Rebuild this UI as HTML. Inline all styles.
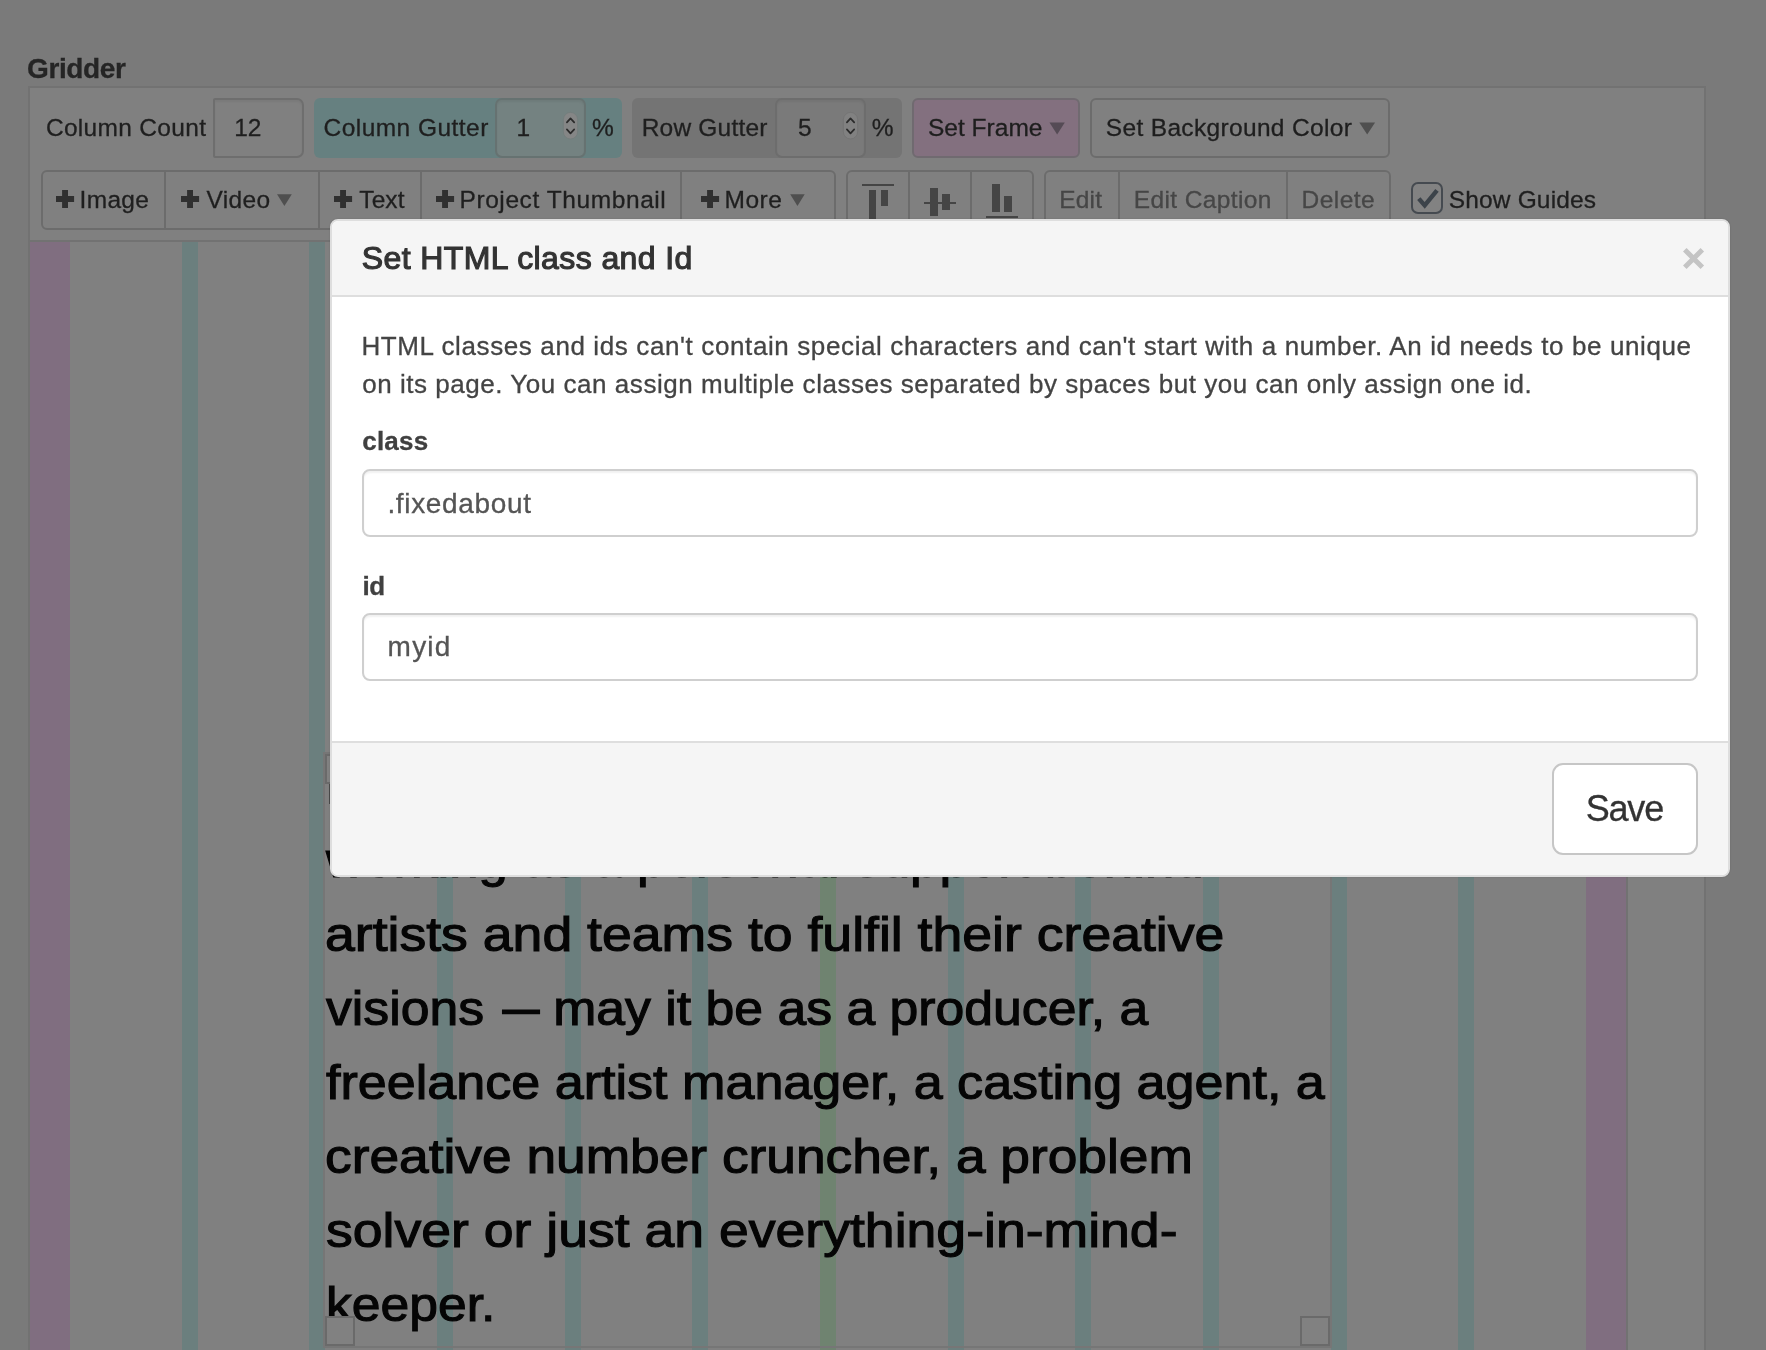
<!DOCTYPE html>
<html lang="en"><head><meta charset="utf-8"><title>Gridder</title>
<style>
html,body{margin:0;padding:0;}
body{width:1766px;height:1350px;overflow:hidden;position:relative;background:#7a7a7a;font-family:"Liberation Sans",sans-serif;}
.b{position:absolute;box-sizing:border-box;}
.t{position:absolute;white-space:nowrap;line-height:1;-webkit-text-stroke:0.3px currentColor;}
svg{position:absolute;overflow:visible;}
</style></head><body><div id="page" style="position:absolute;left:0;top:0;width:1766px;height:1350px;will-change:transform;">
<div class="b" style="left:28px;top:86px;width:1678px;height:1274px;background:#808080;border:2px solid #727272;"></div>
<div class="b" style="left:30px;top:240px;width:1674px;height:2px;background:#727272;"></div>
<div class="b" style="left:30px;top:242px;width:40px;height:1108px;background:#806e80;"></div>
<div class="b" style="left:1586px;top:242px;width:40px;height:1108px;background:#806e80;"></div>
<div class="b" style="left:1626px;top:242px;width:2px;height:1108px;background:#727272;"></div>
<div class="b" style="left:181.62px;top:242px;width:15.96px;height:1108px;background:#6b7f7e;"></div>
<div class="b" style="left:309.30px;top:242px;width:15.96px;height:1108px;background:#6b7f7e;"></div>
<div class="b" style="left:436.98px;top:242px;width:15.96px;height:1108px;background:#6b7f7e;"></div>
<div class="b" style="left:564.66px;top:242px;width:15.96px;height:1108px;background:#6b7f7e;"></div>
<div class="b" style="left:692.34px;top:242px;width:15.96px;height:1108px;background:#6b7f7e;"></div>
<div class="b" style="left:820.02px;top:242px;width:15.96px;height:1108px;background:#6f8370;"></div>
<div class="b" style="left:947.70px;top:242px;width:15.96px;height:1108px;background:#6b7f7e;"></div>
<div class="b" style="left:1075.38px;top:242px;width:15.96px;height:1108px;background:#6b7f7e;"></div>
<div class="b" style="left:1203.06px;top:242px;width:15.96px;height:1108px;background:#6b7f7e;"></div>
<div class="b" style="left:1330.74px;top:242px;width:15.96px;height:1108px;background:#6b7f7e;"></div>
<div class="b" style="left:1458.42px;top:242px;width:15.96px;height:1108px;background:#6b7f7e;"></div>
<span class="t" style="left:27.00px;top:54.70px;font-size:28px;letter-spacing:-0.372px;color:#252525;font-weight:bold;">Gridder</span>
<span class="t" style="left:45.90px;top:115.76px;font-size:24.5px;letter-spacing:0.318px;color:#1f1f1f;">Column Count</span>
<div class="b" style="left:213px;top:98px;width:91px;height:60px;border:2px solid #6e6e6e;border-radius:2px 7px 7px 2px;background:#808080;box-shadow:inset 0 2px 2px rgba(0,0,0,.05);"></div>
<span class="t" style="left:234.20px;top:115.76px;font-size:24.5px;letter-spacing:0.000px;color:#1f1f1f;">12</span>
<div class="b" style="left:314px;top:98px;width:308px;height:60px;background:#668080;border-radius:6px;"></div>
<span class="t" style="left:323.50px;top:115.76px;font-size:24.5px;letter-spacing:0.462px;color:#1f1f1f;">Column Gutter</span>
<div class="b" style="left:495px;top:98px;width:91px;height:60px;border:2px solid #667271;border-radius:7px;background:#748281;box-shadow:inset 0 2px 2px rgba(0,0,0,.05);"></div>
<span class="t" style="left:516.50px;top:115.76px;font-size:24.5px;letter-spacing:0.000px;color:#1f1f1f;">1</span>
<span class="t" style="left:592.00px;top:115.76px;font-size:24.5px;letter-spacing:0.000px;color:#1f1f1f;">%</span>
<div class="b" style="left:632px;top:98px;width:270px;height:60px;background:#747474;border-radius:6px;"></div>
<span class="t" style="left:641.70px;top:115.76px;font-size:24.5px;letter-spacing:0.207px;color:#1f1f1f;">Row Gutter</span>
<div class="b" style="left:775px;top:98px;width:91px;height:60px;border:2px solid #6d6d6d;border-radius:7px;background:#7a7a7a;box-shadow:inset 0 2px 2px rgba(0,0,0,.05);"></div>
<span class="t" style="left:797.90px;top:115.76px;font-size:24.5px;letter-spacing:0.000px;color:#1f1f1f;">5</span>
<span class="t" style="left:871.80px;top:115.76px;font-size:24.5px;letter-spacing:0.000px;color:#1f1f1f;">%</span>
<svg style="left:563.4px;top:112px" width="15" height="27.4" viewBox="0 0 15 27.4"><rect x="0.4" y="0.4" width="14.2" height="26.6" rx="7.1" fill="#858686" stroke="#727c7b" stroke-width="0.8"/><path d="M3.9 10.4 L7.5 6.4 L11.2 10.4 M3.9 17.4 L7.5 21.4 L11.2 17.4" fill="none" stroke="#2a2a2a" stroke-width="1.7" stroke-linecap="round" stroke-linejoin="round"/></svg>
<svg style="left:843.4px;top:112px" width="15" height="27.4" viewBox="0 0 15 27.4"><rect x="0.4" y="0.4" width="14.2" height="26.6" rx="7.1" fill="#818181" stroke="#727272" stroke-width="0.8"/><path d="M3.9 10.4 L7.5 6.4 L11.2 10.4 M3.9 17.4 L7.5 21.4 L11.2 17.4" fill="none" stroke="#2a2a2a" stroke-width="1.7" stroke-linecap="round" stroke-linejoin="round"/></svg>
<div class="b" style="left:912px;top:98px;width:168px;height:60px;background:#83707f;border:2px solid #706a70;border-radius:6px;"></div>
<span class="t" style="left:928.00px;top:115.76px;font-size:24.5px;letter-spacing:0.008px;color:#1e1e1e;">Set Frame</span>
<svg style="left:0;top:0" width="1" height="1"><path d="M1049.5 122.4 L1064.8 122.4 L1057.15 134.4 Z" fill="#554b55"/></svg>
<div class="b" style="left:1090px;top:98px;width:300px;height:60px;border:2px solid #6c6c6c;border-radius:6px;"></div>
<span class="t" style="left:1105.80px;top:115.76px;font-size:24.5px;letter-spacing:0.335px;color:#1e1e1e;">Set Background Color</span>
<svg style="left:0;top:0" width="1" height="1"><path d="M1359.3 122.4 L1375.1 122.4 L1367.1999999999998 134.4 Z" fill="#4f4f4f"/></svg>
<div class="b" style="left:41px;top:170px;width:795px;height:60px;border:2px solid #6c6c6c;border-radius:6px;"></div>
<div class="b" style="left:164px;top:171px;width:2px;height:58px;background:#6c6c6c;"></div>
<div class="b" style="left:318px;top:171px;width:2px;height:58px;background:#6c6c6c;"></div>
<div class="b" style="left:420px;top:171px;width:2px;height:58px;background:#6c6c6c;"></div>
<div class="b" style="left:680px;top:171px;width:2px;height:58px;background:#6c6c6c;"></div>
<svg style="left:55.85px;top:189.9px" width="18.1" height="17.9" viewBox="0 0 18.1 17.9"><path d="M6.1 0 h5.9 v5.9 h6.1 v6.2 h-6.1 v5.8 h-5.9 v-5.8 h-6.1 v-6.2 h6.1 z" fill="#303030"/></svg>
<span class="t" style="left:79.50px;top:187.56px;font-size:24.5px;letter-spacing:0.333px;color:#1f1f1f;">Image</span>
<svg style="left:181px;top:189.9px" width="18.1" height="17.9" viewBox="0 0 18.1 17.9"><path d="M6.1 0 h5.9 v5.9 h6.1 v6.2 h-6.1 v5.8 h-5.9 v-5.8 h-6.1 v-6.2 h6.1 z" fill="#303030"/></svg>
<span class="t" style="left:206.40px;top:187.56px;font-size:24.5px;letter-spacing:0.352px;color:#1f1f1f;">Video</span>
<svg style="left:0;top:0" width="1" height="1"><path d="M277 194.3 L291.8 194.3 L284.4 206 Z" fill="#4f4f4f"/></svg>
<svg style="left:334px;top:189.9px" width="18.1" height="17.9" viewBox="0 0 18.1 17.9"><path d="M6.1 0 h5.9 v5.9 h6.1 v6.2 h-6.1 v5.8 h-5.9 v-5.8 h-6.1 v-6.2 h6.1 z" fill="#303030"/></svg>
<span class="t" style="left:359.30px;top:187.56px;font-size:24.5px;letter-spacing:0.091px;color:#1f1f1f;">Text</span>
<svg style="left:436.3px;top:189.9px" width="18.1" height="17.9" viewBox="0 0 18.1 17.9"><path d="M6.1 0 h5.9 v5.9 h6.1 v6.2 h-6.1 v5.8 h-5.9 v-5.8 h-6.1 v-6.2 h6.1 z" fill="#303030"/></svg>
<span class="t" style="left:459.50px;top:187.56px;font-size:24.5px;letter-spacing:0.581px;color:#1f1f1f;">Project Thumbnail</span>
<svg style="left:701px;top:189.9px" width="18.1" height="17.9" viewBox="0 0 18.1 17.9"><path d="M6.1 0 h5.9 v5.9 h6.1 v6.2 h-6.1 v5.8 h-5.9 v-5.8 h-6.1 v-6.2 h6.1 z" fill="#303030"/></svg>
<span class="t" style="left:724.50px;top:187.56px;font-size:24.5px;letter-spacing:0.536px;color:#1f1f1f;">More</span>
<svg style="left:0;top:0" width="1" height="1"><path d="M790.2 194.3 L804.7 194.3 L797.45 206 Z" fill="#4f4f4f"/></svg>
<div class="b" style="left:846px;top:170px;width:188px;height:60px;border:2px solid #6c6c6c;border-radius:6px;"></div>
<div class="b" style="left:908px;top:171px;width:2px;height:58px;background:#6c6c6c;"></div>
<div class="b" style="left:970px;top:171px;width:2px;height:58px;background:#6c6c6c;"></div>
<div class="b" style="left:862px;top:184px;width:32px;height:2px;background:#454545;"></div>
<div class="b" style="left:869px;top:190px;width:7px;height:32px;background:#454545;"></div>
<div class="b" style="left:881px;top:190px;width:7px;height:16px;background:#454545;"></div>
<div class="b" style="left:924px;top:202px;width:32px;height:2px;background:#454545;"></div>
<div class="b" style="left:930px;top:188px;width:8px;height:28px;background:#454545;"></div>
<div class="b" style="left:942px;top:194px;width:8px;height:16px;background:#454545;"></div>
<div class="b" style="left:992px;top:184px;width:8px;height:28px;background:#454545;"></div>
<div class="b" style="left:1004px;top:196px;width:8px;height:16px;background:#454545;"></div>
<div class="b" style="left:986px;top:216px;width:32px;height:2px;background:#454545;"></div>
<div class="b" style="left:1044px;top:170px;width:347px;height:60px;border:2px solid #6c6c6c;border-radius:6px;"></div>
<div class="b" style="left:1118px;top:171px;width:2px;height:58px;background:#6c6c6c;"></div>
<div class="b" style="left:1286px;top:171px;width:2px;height:58px;background:#6c6c6c;"></div>
<span class="t" style="left:1059.30px;top:187.56px;font-size:24.5px;letter-spacing:0.163px;color:#464646;">Edit</span>
<span class="t" style="left:1133.80px;top:187.56px;font-size:24.5px;letter-spacing:0.369px;color:#464646;">Edit Caption</span>
<span class="t" style="left:1301.50px;top:187.56px;font-size:24.5px;letter-spacing:0.481px;color:#464646;">Delete</span>
<div class="b" style="left:1411px;top:182px;width:32px;height:32px;border:2px solid #454a50;border-radius:7px;background:#828282;"></div>
<svg style="left:1411px;top:182px" width="32" height="32" viewBox="0 0 32 32"><path d="M7.8 16.6 L13.7 23.4 L26 8.4" fill="none" stroke="#3c434a" stroke-width="4.4"/></svg>
<span class="t" style="left:1448.80px;top:188.06px;font-size:24.5px;letter-spacing:0.153px;color:#1f1f1f;">Show Guides</span>
<div class="b" style="left:323.3px;top:752.3px;width:1009.0px;height:595.6000000000001px;border:2px solid #767676;"></div>
<span class="t" style="left:326.20px;top:837.27px;font-size:48px;letter-spacing:0.000px;color:#050505;-webkit-text-stroke:1.1px #050505;transform:scaleX(1.10);transform-origin:0 0;">working as a personal support behind</span>
<span class="t" style="left:325.37px;top:911.27px;font-size:48px;letter-spacing:0.000px;color:#050505;-webkit-text-stroke:1.1px #050505;transform:scaleX(1.1163);transform-origin:0 0;">artists and teams to fulfil their creative</span>
<span class="t" style="left:326.20px;top:985.27px;font-size:48px;letter-spacing:0.000px;color:#050505;-webkit-text-stroke:1.1px #050505;transform:scaleX(1.0775);transform-origin:0 0;">visions <span style="font-size:33px;position:relative;top:-5px;margin-left:4.5px;-webkit-text-stroke:2.4px #050505;">—</span> may it be as a producer, a</span>
<span class="t" style="left:325.60px;top:1059.27px;font-size:48px;letter-spacing:0.000px;color:#050505;-webkit-text-stroke:1.1px #050505;transform:scaleX(1.0850);transform-origin:0 0;">freelance artist manager, a casting agent, a</span>
<span class="t" style="left:325.08px;top:1133.27px;font-size:48px;letter-spacing:0.000px;color:#050505;-webkit-text-stroke:1.1px #050505;transform:scaleX(1.1102);transform-origin:0 0;">creative number cruncher, a problem</span>
<span class="t" style="left:326.18px;top:1207.27px;font-size:48px;letter-spacing:0.000px;color:#050505;-webkit-text-stroke:1.1px #050505;transform:scaleX(1.1160);transform-origin:0 0;">solver or just an everything-in-mind-</span>
<span class="t" style="left:326.07px;top:1281.27px;font-size:48px;letter-spacing:0.000px;color:#050505;-webkit-text-stroke:1.1px #050505;transform:scaleX(1.0758);transform-origin:0 0;">keeper.</span>
<div class="b" style="left:325.1px;top:753.9px;width:29.899999999999977px;height:29.799999999999955px;border:2px solid #6a6a6a;background:#818181;"></div>
<div class="b" style="left:325.1px;top:1316px;width:29.899999999999977px;height:29.799999999999955px;border:2px solid #6a6a6a;background:#818181;"></div>
<div class="b" style="left:1300.2px;top:1316px;width:29.90000000000009px;height:29.799999999999955px;border:2px solid #6a6a6a;background:#818181;"></div>
<div class="b" style="left:329px;top:784px;width:1px;height:20px;background:#4a4a4a;"></div>
<div class="b" style="left:330px;top:219px;width:1400px;height:658px;background:#fff;border:2px solid #dedede;border-radius:8px;overflow:hidden;box-shadow:0 0 1.5px rgba(0,0,0,.2);"><div class="b" style="left:0;top:0;width:1396px;height:76px;background:#f5f5f5;border-bottom:2px solid #dedede;"></div><div class="b" style="left:0;top:520px;width:1396px;height:134px;background:#f5f5f5;border-top:2px solid #dedede;"></div></div>
<span class="t" style="left:361.80px;top:242.41px;font-size:32px;letter-spacing:0.405px;color:#333;-webkit-text-stroke:1.15px #333;">Set HTML class and Id</span>
<svg style="left:1683px;top:248.2px" width="21" height="21" viewBox="0 0 21 21"><path d="M1.8 1.8 L19.3 19.3 M19.3 1.8 L1.8 19.3" stroke="#c4c4c4" stroke-width="5" fill="none"/></svg>
<span class="t" style="left:361.40px;top:332.79px;font-size:26px;letter-spacing:0.613px;color:#444;">HTML classes and ids can't contain special characters and can't start with a number. An id needs to be unique</span>
<span class="t" style="left:362.20px;top:370.79px;font-size:26px;letter-spacing:0.535px;color:#444;">on its page. You can assign multiple classes separated by spaces but you can only assign one id.</span>
<span class="t" style="left:362.20px;top:428.29px;font-size:26px;letter-spacing:0.249px;color:#404040;font-weight:bold;">class</span>
<div class="b" style="left:362px;top:469px;width:1336px;height:68px;border:2px solid #cfcfcf;border-radius:8px;background:#fff;box-shadow:inset 0 2px 2px rgba(0,0,0,.06);"></div>
<span class="t" style="left:387.40px;top:489.50px;font-size:28px;letter-spacing:0.669px;color:#555;">.fixedabout</span>
<span class="t" style="left:362.40px;top:572.99px;font-size:26px;letter-spacing:-0.424px;color:#404040;font-weight:bold;">id</span>
<div class="b" style="left:362px;top:613px;width:1336px;height:68px;border:2px solid #cfcfcf;border-radius:8px;background:#fff;box-shadow:inset 0 2px 2px rgba(0,0,0,.06);"></div>
<span class="t" style="left:387.60px;top:633.30px;font-size:28px;letter-spacing:1.218px;color:#555;">myid</span>
<div class="b" style="left:1552px;top:763px;width:146px;height:92px;border:2px solid #c6c6c6;border-radius:11px;background:#fff;"></div>
<span class="t" style="left:1585.70px;top:790.73px;font-size:36px;letter-spacing:-1.178px;color:#333;">Save</span>
</div></body></html>
